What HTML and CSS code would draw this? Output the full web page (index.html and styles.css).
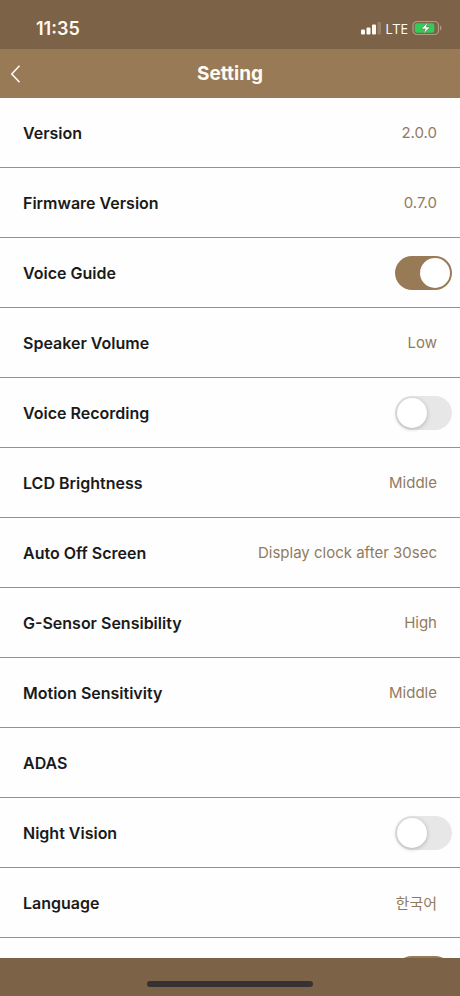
FILE: index.html
```html
<!DOCTYPE html>
<html lang="en">
<head>
<meta charset="utf-8">
<meta name="viewport" content="width=device-width, initial-scale=1">
<title>Setting</title>
<link rel="stylesheet" href="styles.css">
</head>
<body>
<div class="status">
  <time class="clock">11:35</time>
  <div class="indicators">
    <svg class="signal" width="20" height="14" viewBox="0 0 20 14" aria-hidden="true">
      <rect x="0" y="8.500" width="4" height="5" rx="1"/>
      <rect x="5.500" y="6.500" width="4" height="7" rx="1"/>
      <rect x="11" y="3.500" width="4" height="10" rx="1"/>
      <rect class="weak" x="16.500" y="1" width="3.500" height="12.500" rx="1"/>
    </svg>
    <span class="network">LTE</span>
    <svg width="30" height="16" viewBox="0 0 30 16" aria-hidden="true">
      <rect class="shell" x="1" y="1.500" width="25.500" height="13" rx="4"/>
      <rect class="charge" x="2.800" y="3.300" width="19.500" height="9.400" rx="2.200"/>
      <path class="tip" d="M28 5.500c2 .8 2 4.200 0 5z"/>
      <path class="bolt" d="M15.800 2 9.300 8.900h3.900L11.400 14l6.900-7h-4z"/>
    </svg>
  </div>
</div>
<header class="bar">
  <button class="back" type="button" aria-label="Back">
    <svg width="12" height="20" viewBox="0 0 12 20" aria-hidden="true"><path d="M9.500 1.800 1.800 10l7.700 8.200"/></svg>
  </button>
  <h1 class="title" id="title">Setting</h1>
</header>
<main class="list">
  <div class="row"><span class="name">Version</span><span class="value">2.0.0</span></div>
  <div class="row"><span class="name">Firmware Version</span><span class="value">0.7.0</span></div>
  <label class="row"><span class="name">Voice Guide</span><input class="switch" type="checkbox" role="switch" checked></label>
  <button class="row" type="button"><span class="name">Speaker Volume</span><span class="value">Low</span></button>
  <label class="row"><span class="name">Voice Recording</span><input class="switch" type="checkbox" role="switch"></label>
  <button class="row" type="button"><span class="name">LCD Brightness</span><span class="value">Middle</span></button>
  <button class="row" type="button"><span class="name">Auto Off Screen</span><span class="value">Display clock after 30sec</span></button>
  <button class="row" type="button"><span class="name">G-Sensor Sensibility</span><span class="value">High</span></button>
  <button class="row" type="button"><span class="name">Motion Sensitivity</span><span class="value">Middle</span></button>
  <button class="row" type="button"><span class="name">ADAS</span></button>
  <label class="row"><span class="name">Night Vision</span><input class="switch" type="checkbox" role="switch"></label>
  <button class="row" type="button"><span class="name">Language</span><span class="value" lang="ko">한국어</span></button>
  <div class="row"><input class="switch" type="checkbox" role="switch" aria-labelledby="title" checked></div>
</main>
<footer class="home"><div class="handle"></div></footer>
</body>
</html>
```
FILE: styles.css
```css
:root {
  --dark: #7c6246;
  --brown: #987a57;
  --line: #929292;
}

* {
  box-sizing: border-box;
}

body {
  display: flex;
  flex-direction: column;
  height: 100vh;
  margin: 0;
  background: #fefefe;
  color: #1a1a1a;
  font-family: Inter, "Noto Sans CJK KR", sans-serif;
  font-size: 16px;
}

.status {
  display: flex;
  flex: none;
  align-items: center;
  justify-content: space-between;
  height: 49px;
  padding: 7px 18px 0 36px;
  background: var(--dark);
  color: #fffaf2;
}

.clock {
  font-size: 18px;
  font-weight: 600;
}

.indicators {
  display: flex;
  align-items: center;
  gap: 4px;
}

.network {
  font-size: 14px;
  font-family: "Open Sans", sans-serif;
}

.signal {
  fill: #fffaf2;
}

.weak {
  fill: #987f68;
}

.shell {
  fill: none;
  stroke: #b09c86;
  stroke-width: 1.2;
}

.charge {
  fill: #32cc58;
}

.tip {
  fill: #b09c86;
}

.bolt {
  fill: #fff;
  stroke: #5b7048;
  stroke-width: 0.6;
}

.bar {
  display: grid;
  flex: none;
  grid-template-columns: 32px 1fr 32px;
  align-items: center;
  height: 49px;
  background: var(--brown);
  color: #fffaf2;
}

.back {
  display: flex;
  align-items: center;
  height: 48px;
  padding: 0 10px;
  border: 0;
  background: none;
}

.back svg {
  flex: none;
  fill: none;
  stroke: #fffaf2;
  stroke-width: 1.6;
}

.title {
  margin: 0;
  font-size: 19px;
  font-weight: 700;
  text-align: center;
}

.list {
  flex: 1;
  min-height: 0;
  overflow: hidden;
}

.row {
  display: flex;
  align-items: center;
  justify-content: space-between;
  width: 100%;
  height: 70px;
  padding: 0 8px 0 23px;
  border: 0;
  border-bottom: 1px solid var(--line);
  background: none;
  color: inherit;
  font: inherit;
  text-align: left;
}

.name {
  font-weight: 600;
}

.value {
  padding-right: 15px;
  color: #917b60;
  font-size: 15px;
}

.switch {
  flex: none;
  width: 57px;
  height: 34px;
  margin: 0 0 0 auto;
  padding: 2px;
  border-radius: 17px;
  background: #e7e7e7;
  appearance: none;
}

.switch::before {
  display: block;
  width: 30px;
  height: 30px;
  border-radius: 50%;
  background: #fff;
  box-shadow: 0 1px 4px rgba(0, 0, 0, 0.25);
  content: "";
}

.switch:checked {
  background: var(--brown);
}

.switch:checked::before {
  margin-left: auto;
  box-shadow: none;
}

.home {
  display: flex;
  flex: none;
  justify-content: center;
  height: 38px;
  padding-top: 23px;
  background: var(--dark);
}

.handle {
  width: 36%;
  height: 6px;
  border-radius: 3px;
  background: #363233;
}
```
